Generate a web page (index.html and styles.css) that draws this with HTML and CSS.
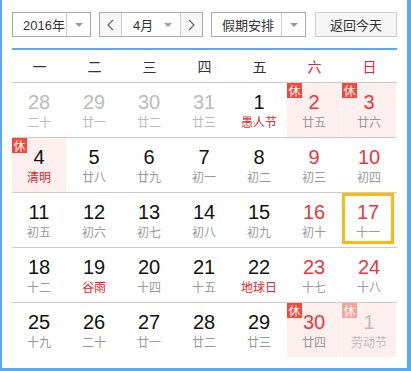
FILE: index.html
```html
<!DOCTYPE html>
<html lang="zh">
<head>
<meta charset="utf-8">
<link rel="stylesheet" href="styles.css">
</head>
<body>
<div class="cal">
  <div class="toolbar">
    <div class="sel year"><span class="sel-text">2016年</span><span class="sel-btn"><i class="tri"></i></span></div>
    <div class="month">
      <span class="nav"><svg width="7" height="12" viewBox="0 0 7 12"><polyline points="6,1 1,6 6,11" fill="none" stroke="#666" stroke-width="1.2"/></svg></span>
      <span class="month-mid"><span>4月</span><i class="tri"></i></span>
      <span class="nav"><svg width="7" height="12" viewBox="0 0 7 12"><polyline points="1,1 6,6 1,11" fill="none" stroke="#666" stroke-width="1.2"/></svg></span>
    </div>
    <div class="sel holiday"><span class="sel-text">假期安排</span><span class="sel-btn"><i class="tri"></i></span></div>
    <div class="today-btn">返回今天</div>
  </div>
  <div class="weekdays">
    <span>一</span><span>二</span><span>三</span><span>四</span><span>五</span><span class="red">六</span><span class="red">日</span>
  </div>
  <div class="week">
    <div class="day other"><div class="num">28</div><div class="lunar">二十</div></div>
    <div class="day other"><div class="num">29</div><div class="lunar">廿一</div></div>
    <div class="day other"><div class="num">30</div><div class="lunar">廿二</div></div>
    <div class="day other"><div class="num">31</div><div class="lunar">廿三</div></div>
    <div class="day"><div class="num">1</div><div class="lunar fest">愚人节</div></div>
    <div class="day rest wk"><span class="badge">休</span><div class="num">2</div><div class="lunar">廿五</div></div>
    <div class="day rest wk"><span class="badge">休</span><div class="num">3</div><div class="lunar">廿六</div></div>
  </div>
  <div class="week">
    <div class="day rest"><span class="badge">休</span><div class="num">4</div><div class="lunar fest">清明</div></div>
    <div class="day"><div class="num">5</div><div class="lunar">廿八</div></div>
    <div class="day"><div class="num">6</div><div class="lunar">廿九</div></div>
    <div class="day"><div class="num">7</div><div class="lunar">初一</div></div>
    <div class="day"><div class="num">8</div><div class="lunar">初二</div></div>
    <div class="day wk"><div class="num">9</div><div class="lunar">初三</div></div>
    <div class="day wk"><div class="num">10</div><div class="lunar">初四</div></div>
  </div>
  <div class="week">
    <div class="day"><div class="num">11</div><div class="lunar">初五</div></div>
    <div class="day"><div class="num">12</div><div class="lunar">初六</div></div>
    <div class="day"><div class="num">13</div><div class="lunar">初七</div></div>
    <div class="day"><div class="num">14</div><div class="lunar">初八</div></div>
    <div class="day"><div class="num">15</div><div class="lunar">初九</div></div>
    <div class="day wk"><div class="num">16</div><div class="lunar">初十</div></div>
    <div class="day wk today"><div class="num">17</div><div class="lunar">十一</div></div>
  </div>
  <div class="week">
    <div class="day"><div class="num">18</div><div class="lunar">十二</div></div>
    <div class="day"><div class="num">19</div><div class="lunar fest">谷雨</div></div>
    <div class="day"><div class="num">20</div><div class="lunar">十四</div></div>
    <div class="day"><div class="num">21</div><div class="lunar">十五</div></div>
    <div class="day"><div class="num">22</div><div class="lunar fest">地球日</div></div>
    <div class="day wk"><div class="num">23</div><div class="lunar">十七</div></div>
    <div class="day wk"><div class="num">24</div><div class="lunar">十八</div></div>
  </div>
  <div class="week">
    <div class="day"><div class="num">25</div><div class="lunar">十九</div></div>
    <div class="day"><div class="num">26</div><div class="lunar">二十</div></div>
    <div class="day"><div class="num">27</div><div class="lunar">廿一</div></div>
    <div class="day"><div class="num">28</div><div class="lunar">廿二</div></div>
    <div class="day"><div class="num">29</div><div class="lunar">廿三</div></div>
    <div class="day rest wk"><span class="badge">休</span><div class="num">30</div><div class="lunar">廿四</div></div>
    <div class="day rest other"><span class="badge light">休</span><div class="num">1</div><div class="lunar">劳动节</div></div>
  </div>
</div>
</body>
</html>
```

FILE: styles.css
```css
html, body {
  margin: 0;
  padding: 0;
  background: #fff;
}
.cal {
  width: 411px;
  height: 371px;
  box-sizing: border-box;
  border-left: 2px solid #5ba8f5;
  border-right: 4px solid #5ba8f5;
  border-bottom: 3px solid #5ba8f5;
  padding: 12px 10px 0 10px;
  font-family: "Liberation Sans", "Noto Sans CJK SC", sans-serif;
  color: #333;
}
.toolbar {
  display: flex;
  height: 25px;
  font-size: 13px;
}
.sel, .month, .today-btn {
  box-sizing: border-box;
  height: 25px;
  display: flex;
  align-items: stretch;
  border: 1px solid #aaa;
  background: #fff;
}
.sel-text {
  flex: 1;
  display: flex;
  align-items: center;
  padding-left: 10px;
}
.sel-btn {
  width: 23px;
  border-left: 1px solid #ccc;
  display: flex;
  align-items: center;
  justify-content: center;
}
.tri {
  width: 0;
  height: 0;
  border-left: 4px solid transparent;
  border-right: 4px solid transparent;
  border-top: 4px solid #999;
}
.year {
  width: 79px;
}
.month {
  width: 104px;
  margin-left: 8px;
}
.nav {
  width: 21px;
  background: #f7f7f7;
  display: flex;
  align-items: center;
  justify-content: center;
}
.month-mid {
  flex: 1;
  display: flex;
  align-items: center;
  justify-content: space-between;
  padding: 0 8px 0 11px;
  border-left: 1px solid #ccc;
  border-right: 1px solid #ccc;
}
.holiday {
  width: 95px;
  margin-left: 8px;
}
.today-btn {
  width: 82px;
  margin-left: 9px;
  border-color: #ccc;
  background: #f6f6f6;
  align-items: center;
  justify-content: center;
}
.weekdays {
  margin-top: 11px;
  border-top: 2px solid #5ba8f5;
  height: 32px;
  display: grid;
  grid-template-columns: repeat(7, 55px);
  align-items: center;
  font-size: 14px;
  color: #333;
}
.weekdays span {
  text-align: center;
  font-family: "Noto Sans CJK SC", sans-serif;
}
.weekdays .red {
  color: #e3262a;
}
.week {
  border-top: 1px solid #ccc;
  display: grid;
  grid-template-columns: repeat(7, 55px);
  height: 54px;
}
.day {
  position: relative;
  margin-right: 1px;
  box-sizing: border-box;
  padding-top: 9px;
  text-align: center;
}
.num {
  font-size: 20px;
  line-height: 20px;
  color: #111;
}
.lunar {
  margin-top: 3px;
  font-size: 12px;
  line-height: 14px;
  color: #999;
  font-family: "Noto Sans CJK SC", sans-serif;
}
.fest {
  color: #e3262a;
}
.wk .num {
  color: #e8383b;
}
.other .num {
  color: #bbb;
}
.other .lunar {
  color: #bbb;
}
.rest {
  background: #fdefee;
}
.badge {
  position: absolute;
  left: 0;
  top: 0;
  width: 15px;
  height: 15px;
  background: #f5473a;
  color: #fff;
  font-size: 12px;
  line-height: 15px;
  text-align: center;
  font-family: "Noto Sans CJK SC", sans-serif;
}
.badge.light {
  background: #f7a29b;
}
.today {
  width: 52px;
  height: 51px;
  margin-top: 0;
  box-shadow: inset 0 0 0 3px #fbb812;
}
```
